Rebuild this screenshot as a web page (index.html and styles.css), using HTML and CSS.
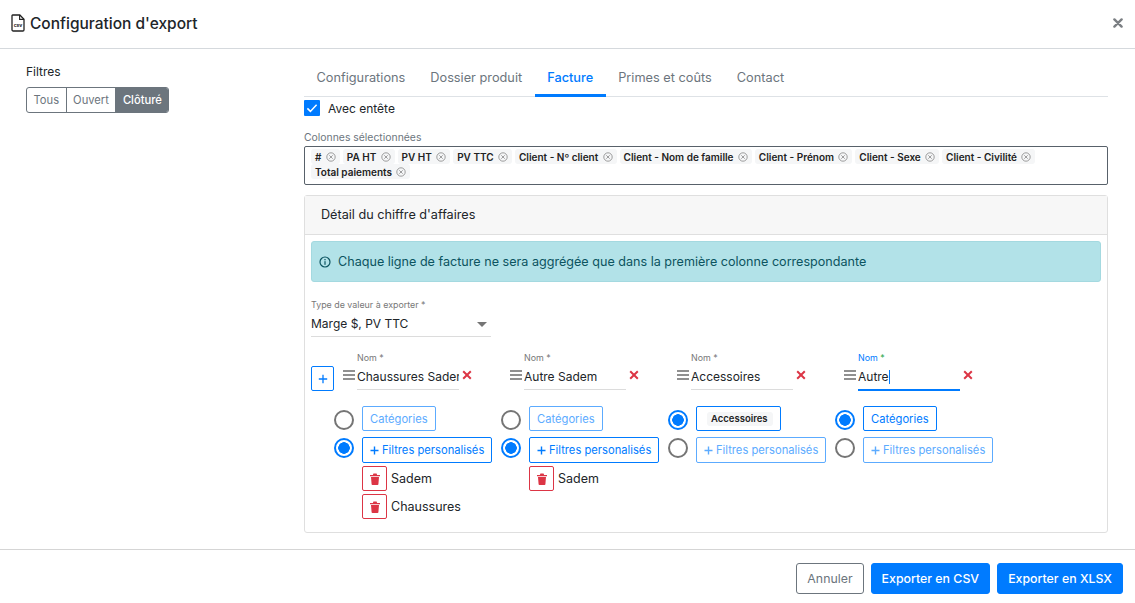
FILE: index.html
```html
<!DOCTYPE html>
<html lang="fr">
<head>
  <meta charset="UTF-8">
  <meta name="viewport" content="width=device-width, initial-scale=1.0">
  <title>Configuration d'export</title>
  <link rel="stylesheet" href="styles.css">
</head>
<body>
  <header class="modal-header">
    <h1 class="modal-title">
      <svg class="file-icon" viewBox="0 0 14 18" width="14" height="18">
        <path d="M1.6 1h7.2L13 5.2v10.6c0 .7-.5 1.2-1.2 1.2H2.2c-.7 0-1.2-.5-1.2-1.2V1.6c0-.3.3-.6.6-.6z" fill="none" stroke="#222" stroke-width="1.3"/>
        <path d="M8.6 1v4.4H13" fill="none" stroke="#222" stroke-width="1.1"/>
        <text x="7" y="13.4" text-anchor="middle" class="file-icon-text">csv</text>
      </svg>
      Configuration d'export
    </h1>
    <svg class="close-icon" viewBox="0 0 10 10" width="10" height="10">
      <path d="M1.4 1.4l7.2 7.2M8.6 1.4l-7.2 7.2" stroke="#7b7f83" stroke-width="2.4" stroke-linecap="round"/>
    </svg>
  </header>

  <main class="modal-body">
    <aside class="filters">
      <div class="filters-title">Filtres</div>
      <div class="btn-group">
        <span class="btn-group-item">Tous</span>
        <span class="btn-group-item">Ouvert</span>
        <span class="btn-group-item active">Clôturé</span>
      </div>
    </aside>

    <section class="content">
      <nav class="tabs">
        <a class="tab">Configurations</a>
        <a class="tab">Dossier produit</a>
        <a class="tab active">Facture</a>
        <a class="tab">Primes et coûts</a>
        <a class="tab">Contact</a>
      </nav>

      <label class="check-row">
        <span class="checkbox">
          <svg viewBox="0 0 16 16" width="16" height="16"><path d="M3.4 8.4l3 3 6.2-6.6" fill="none" stroke="#fff" stroke-width="1.5"/></svg>
        </span>
        Avec entête
      </label>

      <div class="columns-label">Colonnes sélectionnées</div>
      <div class="chips" id="chips"></div>

      <div class="card">
        <div class="card-header">Détail du chiffre d'affaires</div>
        <div class="card-body">
          <div class="alert">
            <svg viewBox="0 0 12 12" width="12" height="12">
              <circle cx="6" cy="6" r="5" fill="none" stroke="#0c5460" stroke-width="1.2"/>
              <rect x="5.4" y="5.2" width="1.2" height="3.6" fill="#0c5460"/>
              <rect x="5.4" y="3" width="1.2" height="1.3" fill="#0c5460"/>
            </svg>
            Chaque ligne de facture ne sera aggrégée que dans la première colonne correspondante
          </div>

          <div class="select-field">
            <div class="small-label">Type de valeur à exporter *</div>
            <div class="select-value">Marge $, PV TTC <span class="caret"></span></div>
          </div>

          <div class="groups" id="groups">
            <button class="add-btn">
              <svg viewBox="0 0 10 10" width="10" height="10"><path d="M5 .8v8.4M.8 5h8.4" stroke="#007bff" stroke-width="1.3"/></svg>
            </button>
          </div>
        </div>
      </div>
    </section>
  </main>

  <footer class="modal-footer">
    <button class="btn btn-outline">Annuler</button>
    <button class="btn btn-primary">Exporter en CSV</button>
    <button class="btn btn-primary">Exporter en XLSX</button>
  </footer>

  <script src="app.js"></script>
</body>
</html>
```

FILE: styles.css
```css
* {
  box-sizing: border-box;
}
body {
  font-family: 'Inter', 'Liberation Sans', sans-serif;
  background-color: #fff;
  margin: 0;
  height: 603px;
  overflow: hidden;
  color: #212529;
  display: flex;
  flex-direction: column;
}
.modal-header {
  height: 49px;
  border-bottom: 1px solid #d5d9dd;
  display: flex;
  align-items: center;
  justify-content: space-between;
  padding: 0 12px 2px 11px;
}
.modal-title {
  margin: 0;
  font-size: 15.5px;
  font-weight: 500;
  display: flex;
  align-items: center;
  gap: 5px;
}
.file-icon-text {
  font-size: 5px;
  font-weight: 700;
  fill: #222;
}
.modal-body {
  flex: 1;
  display: flex;
}
.filters {
  width: 304px;
  padding: 15px 0 0 26px;
}
.filters-title {
  font-size: 12px;
  line-height: 15px;
  margin-bottom: 8px;
}
.btn-group {
  display: inline-flex;
  border: 1px solid #6c757d;
  border-radius: 3px;
  font-size: 11.2px;
  color: #6c757d;
  height: 26px;
  overflow: hidden;
}
.btn-group-item {
  display: flex;
  align-items: center;
  padding: 0 6.5px;
  border-right: 1px solid #6c757d;
}
.btn-group-item.active {
  background-color: #6c757d;
  color: #fff;
  border-right: none;
  font-weight: 500;
}
.content {
  width: 804px;
}
.tabs {
  display: flex;
  height: 48px;
  padding-top: 14px;
  border-bottom: 1px solid #dee2e6;
}
.tab {
  font-size: 12.75px;
  color: #6c757d;
  padding: 0 12.5px;
  line-height: 29px;
  height: 34px;
}
.tab.active {
  color: #007bff;
  font-weight: 500;
  border-bottom: 3px solid #007bff;
}
.check-row {
  display: flex;
  align-items: center;
  gap: 8px;
  font-size: 12px;
  height: 16px;
  margin-top: 3px;
}
.checkbox {
  width: 16px;
  height: 16px;
  background-color: #007bff;
  border-radius: 1px;
}
.columns-label {
  font-size: 10.4px;
  line-height: 12px;
  color: #6c757d;
  margin-top: 16px;
  margin-bottom: 2px;
}
.chips {
  border: 1px solid #58616a;
  border-radius: 2px;
  height: 39px;
  padding: 2px 6px;
  display: flex;
  flex-wrap: wrap;
  gap: 0 3px;
  align-content: flex-start;
}
.chip {
  display: inline-flex;
  align-items: center;
  gap: 4.3px;
  height: 15px;
  padding: 0 4px;
  background-color: #f5f6f7;
  border-radius: 3px;
  font-size: 10px;
  font-weight: 600;
  color: #222;
}
.card {
  margin-top: 10px;
  height: 338px;
  border: 1px solid #dfdfdf;
  border-radius: 3px;
}
.card-header {
  height: 39px;
  background-color: #f7f7f7;
  border-bottom: 1px solid #dfdfdf;
  padding-left: 16px;
  font-size: 12.65px;
  line-height: 38px;
}
.card-body {
  padding: 6px;
}
.alert {
  height: 41px;
  background-color: #b2e2e8;
  border: 1px solid #a4d9e0;
  border-radius: 3px;
  color: #0c5460;
  font-size: 12.6px;
  display: flex;
  align-items: center;
  gap: 7px;
  padding-left: 7px;
}
.select-field {
  width: 180px;
  margin-top: 17px;
  border-bottom: 1px solid #dcdcdc;
  height: 38px;
}
.small-label {
  font-size: 8.9px;
  line-height: 12px;
  color: #777;
}
.select-value {
  font-size: 12px;
  line-height: 22px;
  margin-top: 2px;
  display: flex;
  justify-content: space-between;
  align-items: center;
  padding-right: 4px;
}
.caret {
  width: 0;
  height: 0;
  border-left: 5.5px solid transparent;
  border-right: 5.5px solid transparent;
  border-top: 5px solid #757575;
}
.groups {
  display: flex;
  margin-top: 15px;
}
.add-btn {
  width: 23px;
  height: 25px;
  margin: 14px 0 0 0;
  padding: 0;
  flex-shrink: 0;
  background-color: #fff;
  border: 1px solid #007bff;
  border-radius: 2px;
  display: flex;
  align-items: center;
  justify-content: center;
}
.group {
  width: 167px;
}
.name-row {
  display: flex;
  margin-left: 9px;
  height: 39px;
}
.menu-icon {
  flex-shrink: 0;
  margin: 18px 2px 0 0;
}
.name-field {
  width: 102px;
  height: 38px;
  border-bottom: 1px solid #dcdcdc;
  overflow: hidden;
}
.name-field.focused {
  height: 39px;
  border-bottom: 2px solid #007bff;
}
.name-field.focused .small-label {
  color: #007bff;
}
.name-field.focused .small-label span {
  color: #28a745;
}
.name-input {
  font-size: 12px;
  line-height: 22px;
  margin-top: 2px;
  white-space: nowrap;
}
.cursor {
  display: inline-block;
  width: 1px;
  height: 14px;
  background-color: #007bff;
  vertical-align: -3px;
}
.remove-icon {
  margin: 18px 0 0 3px;
}
.options {
  margin-top: 15px;
}
.option {
  display: flex;
  align-items: center;
  gap: 8px;
  margin-top: 6px;
}
.option-first .radio {
  margin-top: 3px;
}
.option-second .radio {
  margin-bottom: 4px;
}
.radio {
  width: 20px;
  height: 20px;
  border-radius: 50%;
  border: 2px solid #757575;
  flex-shrink: 0;
}
.radio.on {
  border-color: #007bff;
  background: radial-gradient(circle, #007bff 5.5px, #fff 6px);
}
.opt-btn {
  height: 25px;
  font-size: 11.2px;
  padding: 0 7px;
  color: #007bff;
  border: 1px solid #007bff;
  border-radius: 2px;
  display: flex;
  align-items: center;
  gap: 3px;
  white-space: nowrap;
}
.option-second .opt-btn {
  height: 26px;
}
.opt-btn.faded {
  color: #5cabff;
  border-color: #5cabff;
}
.opt-btn .chip {
  height: 14px;
  margin-left: 3px;
  padding: 0 5px 0 4px;
  font-size: 9.5px;
}
.rule {
  display: flex;
  align-items: center;
  gap: 4px;
  margin: 3px 0 0 28px;
  font-size: 12.5px;
}
.trash-btn {
  width: 25px;
  height: 25px;
  border: 1px solid #dc3545;
  border-radius: 2px;
  display: flex;
  align-items: center;
  justify-content: center;
}
.modal-footer {
  height: 54px;
  border-top: 1px solid #d5d5d5;
  display: flex;
  justify-content: flex-end;
  gap: 7px;
  padding: 13px 12px 0 0;
}
.btn {
  height: 31px;
  font-family: inherit;
  font-size: 12.35px;
  border-radius: 3px;
  padding: 0 10px;
}
.btn-outline {
  background-color: #fff;
  color: #6c757d;
  border: 1px solid #6c757d;
}
.btn-primary {
  background-color: #007bff;
  color: #fff;
  border: 1px solid #007bff;
  font-weight: 500;
}
```

FILE: app.js
```js
const chipNames = ['#', 'PA HT', 'PV HT', 'PV TTC', 'Client - Nº client', 'Client - Nom de famille',
  'Client - Prénom', 'Client - Sexe', 'Client - Civilité', 'Total paiements'];

const chipIcon = `<svg viewBox="0 0 10 10" width="10" height="10">
  <circle cx="5" cy="5" r="4.2" fill="none" stroke="#777" stroke-width=".7"/>
  <path d="M3.3 3.3l3.4 3.4M6.7 3.3l-3.4 3.4" stroke="#777" stroke-width=".7"/>
</svg>`;

const menuIcon = `<svg class="menu-icon" viewBox="0 0 12 10" width="12" height="10">
  <path d="M0 1h12M0 5h12M0 9h12" stroke="#222" stroke-width="1.2"/>
</svg>`;

const removeIcon = `<svg class="remove-icon" viewBox="0 0 10 10" width="10" height="10">
  <path d="M1.2 1.2l7.6 7.6M8.8 1.2l-7.6 7.6" stroke="#dc3545" stroke-width="2"/>
</svg>`;

const plusIcon = `<svg viewBox="0 0 9 9" width="9" height="9"><path d="M4.5 .5v8M.5 4.5h8" stroke="currentColor" stroke-width="1.4"/></svg>`;

const trashIcon = `<svg viewBox="0 0 10 12" width="10" height="12">
  <path d="M0 2h10v1.2H0zM3.4 .4h3.2l.5 1.6H2.9zM1 4h8l-.6 7.2c0 .4-.4.8-.8.8H2.4c-.4 0-.8-.4-.8-.8z" fill="#dc3545"/>
</svg>`;

const groups = [
  { name: 'Chaussures Sadem', first: false, rules: ['Sadem', 'Chaussures'] },
  { name: 'Autre Sadem', first: false, rules: ['Sadem'] },
  { name: 'Accessoires', first: true, chip: 'Accessoires', rules: [] },
  { name: 'Autre', first: true, focused: true, rules: [] }
];

document.getElementById('chips').innerHTML = chipNames
  .map(name => `<span class="chip">${name} ${chipIcon}</span>`)
  .join('');

const groupsEl = document.getElementById('groups');
groups.forEach(g => {
  const group = document.createElement('div');
  group.className = 'group';
  const catLabel = g.chip ? `<span class="chip">${g.chip}</span>` : 'Catégories';
  group.innerHTML = `
    <div class="name-row">
      ${menuIcon}
      <div class="name-field ${g.focused ? 'focused' : ''}">
        <div class="small-label">Nom <span>*</span></div>
        <div class="name-input">${g.name}${g.focused ? '<i class="cursor"></i>' : ''}</div>
      </div>
      ${removeIcon}
    </div>
    <div class="options">
      <div class="option option-first">
        <span class="radio ${g.first ? 'on' : ''}"></span>
        <span class="opt-btn ${g.first ? '' : 'faded'}">${catLabel}</span>
      </div>
      <div class="option option-second">
        <span class="radio ${g.first ? '' : 'on'}"></span>
        <span class="opt-btn ${g.first ? 'faded' : ''}">${plusIcon} Filtres personalisés</span>
      </div>
      ${g.rules.map(r => `<div class="rule"><span class="trash-btn">${trashIcon}</span>${r}</div>`).join('')}
    </div>`;
  groupsEl.appendChild(group);
});
```
